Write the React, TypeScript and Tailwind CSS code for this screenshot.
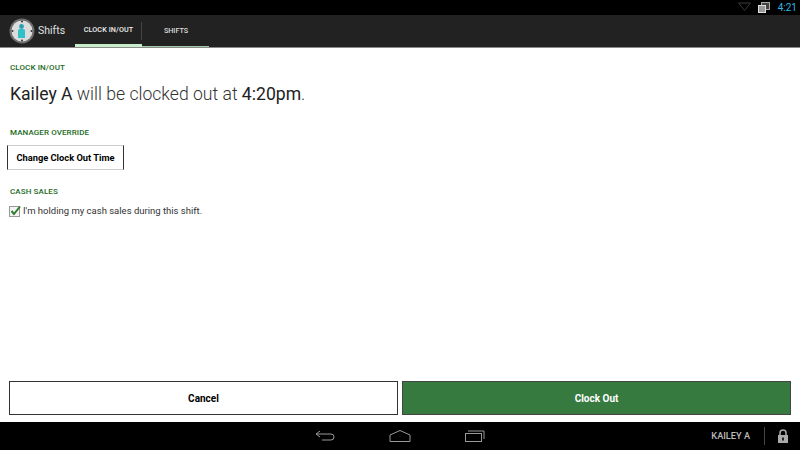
export default function App() {
  return (
    <div className="w-[800px] h-[450px] flex flex-col overflow-hidden bg-white font-['Roboto',sans-serif]">
      {/* status bar */}
      <div className="h-[15px] bg-black flex items-center justify-end">
        <svg width="13" height="9" viewBox="0 0 13 9" className="mr-[7px] -mt-[3px]">
          <path d="M0.5 1 H12.5 L6.5 8.5 Z" fill="none" stroke="#3a3a3a" strokeWidth="1" />
        </svg>
        <svg width="12" height="11" viewBox="0 0 12 11" className="mr-[8px]">
          <rect x="3.5" y="0.5" width="8" height="7" fill="#444" stroke="#aaa" />
          <rect x="0.5" y="3.5" width="7" height="7" fill="#999" stroke="#ddd" />
        </svg>
        <span className="text-[10px] leading-[15px] text-[#33b5e5] mr-[3px]">4:21</span>
      </div>
      {/* action bar */}
      <div className="h-[33px] bg-[#222222] flex border-b border-[#8a8a8a]">
        <div className="w-[75px] flex items-center">
          <svg width="26" height="26" viewBox="0 0 26 26" className="ml-[9px] shrink-0">
            <circle cx="13" cy="13" r="12.5" fill="#6e6e6e" />
            <circle cx="13" cy="13" r="10.5" fill="#dcdcdc" />
            <circle cx="13" cy="3.5" r="1" fill="#333" />
            <circle cx="13" cy="22.5" r="1" fill="#333" />
            <circle cx="3.5" cy="13" r="1" fill="#333" />
            <circle cx="22.5" cy="13" r="1" fill="#333" />
            <circle cx="12.5" cy="8.5" r="2.4" fill="#2a9fae" />
            <path d="M9 12.5 Q9 11 10.5 11 H14.5 Q16 11 16 12.5 V20 H9 Z" fill="#31c0c8" />
          </svg>
          <span className="ml-[3px] text-[10.5px] text-[#e0e0e0]">Shifts</span>
        </div>
        <div className="w-[67px] h-[32px] flex items-center justify-center border-b-[3px] border-[#c9eccb] relative">
          <span className="text-[7.2px] font-medium text-[#eeeeee] tracking-[0.1px] mt-[2px]">CLOCK IN/OUT</span>
          <div className="absolute right-0 top-[7px] w-px h-[18px] bg-[#444]" />
        </div>
        <div className="w-[67px] h-[32px] flex items-center justify-center border-b border-[#a5c9a7]">
          <span className="text-[7.2px] font-medium text-[#dddddd] mt-px pl-[1px]">SHIFTS</span>
        </div>
      </div>
      {/* content */}
      <div className="flex-1 flex flex-col px-[10px] pb-[7px]">
        <div className="text-[8px] font-medium text-[#1b6b24] mt-[15px] leading-[10px] tracking-[0.1px]">CLOCK IN/OUT</div>
        <div className="text-[17.6px] font-light text-[#333] mt-[9px] leading-[24px]">
          <span className="font-normal text-[#222]">Kailey A</span> will be clocked out at <span className="font-normal text-[#222]">4:20pm</span>.
        </div>
        <div className="text-[8px] font-medium text-[#1b6b24] mt-[22px] leading-[10px] tracking-[0.1px]">MANAGER OVERRIDE</div>
        <div className="-ml-[3px] mt-[7px] w-[117px] h-[25px] border-x border-x-[#333] border-y border-y-[#ccc] flex items-center justify-center text-[9.3px] font-bold text-black">
          Change Clock Out Time
        </div>
        <div className="text-[8px] font-medium text-[#1b6b24] mt-[17px] leading-[10px] tracking-[0.1px]">CASH SALES</div>
        <div className="flex items-center mt-[7px] h-[14px] -ml-px">
          <svg width="12" height="12" viewBox="0 0 12 12" className="shrink-0">
            <rect x="0.5" y="1.5" width="10" height="10" fill="#f3f3f3" stroke="#999" />
            <path d="M2.5 6 L5 9 L11 1.5" fill="none" stroke="#2e7d32" strokeWidth="2" />
          </svg>
          <span className="ml-[2px] text-[9.5px] text-[#333]">I'm holding my cash sales during this shift.</span>
        </div>
        <div className="mt-auto flex gap-[4px] -mx-px">
          <div className="w-[389px] h-[34px] border border-[#333] flex items-center justify-center text-[10px] font-bold text-black">Cancel</div>
          <div className="w-[389px] h-[34px] border border-[#444] bg-[#367a40] flex items-center justify-center text-[10px] font-bold text-white">Clock Out</div>
        </div>
      </div>
      {/* nav bar */}
      <div className="h-[28px] bg-black flex items-center relative">
        <div className="flex-1 flex items-center justify-center gap-[54px]">
          <svg width="20" height="12" viewBox="0 0 20 12">
            <path d="M5 1 L1 4 L5 7 M1 4 H16 Q19 4 19 7 Q19 10 16 10 H7" fill="none" stroke="#999" />
          </svg>
          <svg width="22" height="12" viewBox="0 0 22 12">
            <path d="M1 5 L11 0.5 L21 5 V11.5 H1 Z" fill="none" stroke="#999" />
          </svg>
          <svg width="20" height="12" viewBox="0 0 20 12">
            <rect x="0.5" y="3.5" width="16" height="8" fill="none" stroke="#999" />
            <path d="M3 1 H19 V9" fill="none" stroke="#999" />
          </svg>
        </div>
        <div className="absolute right-0 top-0 h-full flex items-center">
          <span className="text-[9.2px] text-[#bbbbbb] font-medium mr-[14px]">KAILEY A</span>
          <div className="w-px h-[18px] bg-[#444] mr-[12px]" />
          <svg width="12" height="14" viewBox="0 0 12 14" className="mr-[11px]">
            <path d="M3 6 V4 A3 3 0 0 1 9 4 V6" fill="none" stroke="#aaa" strokeWidth="1.5" />
            <rect x="1" y="6" width="10" height="8" fill="#aaa" />
            <rect x="5.2" y="8.5" width="1.6" height="3" fill="#000" />
          </svg>
        </div>
      </div>
    </div>
  );
}
